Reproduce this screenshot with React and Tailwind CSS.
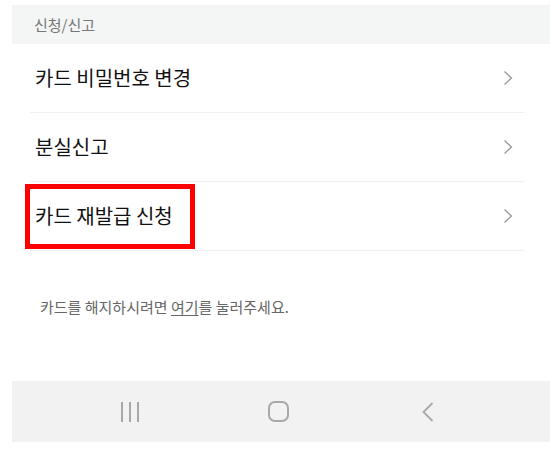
const font = { fontFamily: '"Noto Sans CJK KR", "Noto Sans", sans-serif' };

function Chevron() {
  return (
    <svg width="10" height="16" viewBox="0 0 10 16" fill="none">
      <path d="M1.5 1.5 L8.5 8 L1.5 14.5" stroke="#9a9a9a" strokeWidth="1.3" />
    </svg>
  );
}

function Row({ label, boxed }) {
  return (
    <div className="relative flex h-[69px] items-center justify-between border-b border-[#f1f1f1] pl-[5px] pr-[12px]">
      <span className="text-[20px] text-[#111]">{label}</span>
      <Chevron />
      {boxed && (
        <div className="absolute left-[-5px] top-[2px] h-[65px] w-[170px] border-[5px] border-[#ff0000]" />
      )}
    </div>
  );
}

export default function App() {
  const rows = ["카드 비밀번호 변경", "분실신고", "카드 재발급 신청"];

  return (
    <div className="h-[450px] w-[550px] bg-white pl-[12px] pt-[5px]" style={font}>
      <div className="flex h-[39px] items-center bg-[#f4f5f5] pl-[22px] pt-[2px] text-[15px] text-[#777]">
        신청/신고
      </div>

      <div className="ml-[18px] mr-[25px]">
        {rows.map((r, i) => (
          <Row key={r} label={r} boxed={i === 2} />
        ))}
      </div>

      <p className="ml-[28px] mt-[46px] text-[15px] leading-[20px] text-[#666]">
        카드를 해지하시려면 <span className="underline underline-offset-2">여기</span>를 눌러주세요.
      </p>

      <div className="mt-[64px] flex h-[61px] items-center bg-[#f2f2f2] pl-[109px]">
        <div className="flex h-[20px] gap-[6px]">
          <div className="h-full w-[2px] bg-[#a8a8a8]" />
          <div className="h-full w-[2px] bg-[#a8a8a8]" />
          <div className="h-full w-[2px] bg-[#a8a8a8]" />
        </div>
        <div className="ml-[129px] h-[21px] w-[21px] rounded-[7px] border-2 border-[#a8a8a8]" />
        <svg className="ml-[133px]" width="12" height="20" viewBox="0 0 12 20" fill="none">
          <path d="M10.5 1 L1.5 10 L10.5 19" stroke="#a8a8a8" strokeWidth="1.8" />
        </svg>
      </div>
    </div>
  );
}
